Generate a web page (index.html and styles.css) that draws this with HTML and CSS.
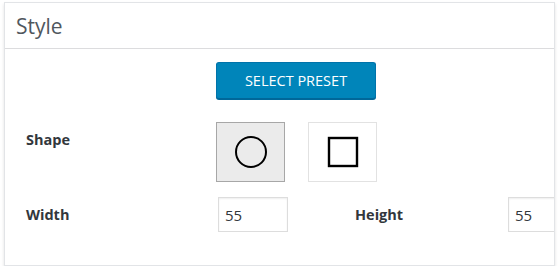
FILE: index.html
```html
<!DOCTYPE html>
<html lang="en">
<head>
    <meta charset="UTF-8">
    <title>Style</title>
    <link rel="stylesheet" href="styles.css">
</head>
<body>
    <div class="panel">
        <div class="panel-head">Style</div>
        <div class="panel-body">
            <div class="preset-row">
                <button class="button-primary">SELECT PRESET</button>
            </div>
            <div class="shape-row">
                <div class="label">Shape</div>
                <div class="shape-options">
                    <button class="shape-btn active">
                        <svg width="34" height="34" viewBox="0 0 34 34"><circle cx="17" cy="17" r="15" fill="none" stroke="#000" stroke-width="2"/></svg>
                    </button>
                    <button class="shape-btn">
                        <svg width="32" height="32" viewBox="0 0 32 32"><rect x="2" y="2" width="28" height="28" fill="none" stroke="#000" stroke-width="2.4"/></svg>
                    </button>
                </div>
            </div>
            <div class="size-row">
                <div class="label">Width</div>
                <input class="num-input" type="text" value="55">
                <div class="label">Height</div>
                <input class="num-input" type="text" value="55">
            </div>
        </div>
    </div>
</body>
</html>
```

FILE: styles.css
```css
body { margin: 0; background: #fff; font-family: "Open Sans", "Noto Sans", sans-serif; color: #23282d; }
.panel { width: 549px; height: 262px; margin: 2px 0 0 4px; border: 1px solid #e2e4e7; background: #fff; box-shadow: 0 2px 3px rgba(0,0,0,0.12); overflow: hidden; }
.panel-head { height: 45px; border-bottom: 1px solid #dcdcde; padding-left: 11px; font-size: 21px; line-height: 46px; color: #50575e; }
.panel-body { padding-left: 21px; }
.preset-row { padding: 13px 0 0 190px; }
.button-primary { width: 160px; height: 37px; background: #0085ba; border: 1px solid #0073aa; border-bottom-color: #006799; border-radius: 3px; box-shadow: 0 1px 0 #006799; color: #fff; font-family: inherit; font-size: 14.5px; padding: 0; cursor: pointer; }
.shape-row { display: flex; margin-top: 23px; }
.label { font-size: 14.5px; font-weight: bold; color: #32373c; }
.shape-row .label { width: 190px; padding-top: 8px; }
.shape-options { display: flex; gap: 23px; }
.shape-btn { width: 69px; height: 60px; display: flex; align-items: center; justify-content: center; background: #fff; border: 1px solid #e2e2e2; padding: 0; }
.shape-btn.active { background: #ebebeb; border-color: #a7a7a7; }
.size-row { display: grid; grid-template-columns: 190px 139px 153px 70px; align-items: center; margin-top: 15px; }
.num-input { width: 70px; height: 35px; box-sizing: border-box; border: 1px solid #ddd; box-shadow: inset 0 1px 2px rgba(0,0,0,0.07); padding: 0 6px; font-family: inherit; font-size: 15px; color: #32373c; }
.size-row .num-input:first-of-type { margin-left: 2px; }
```
